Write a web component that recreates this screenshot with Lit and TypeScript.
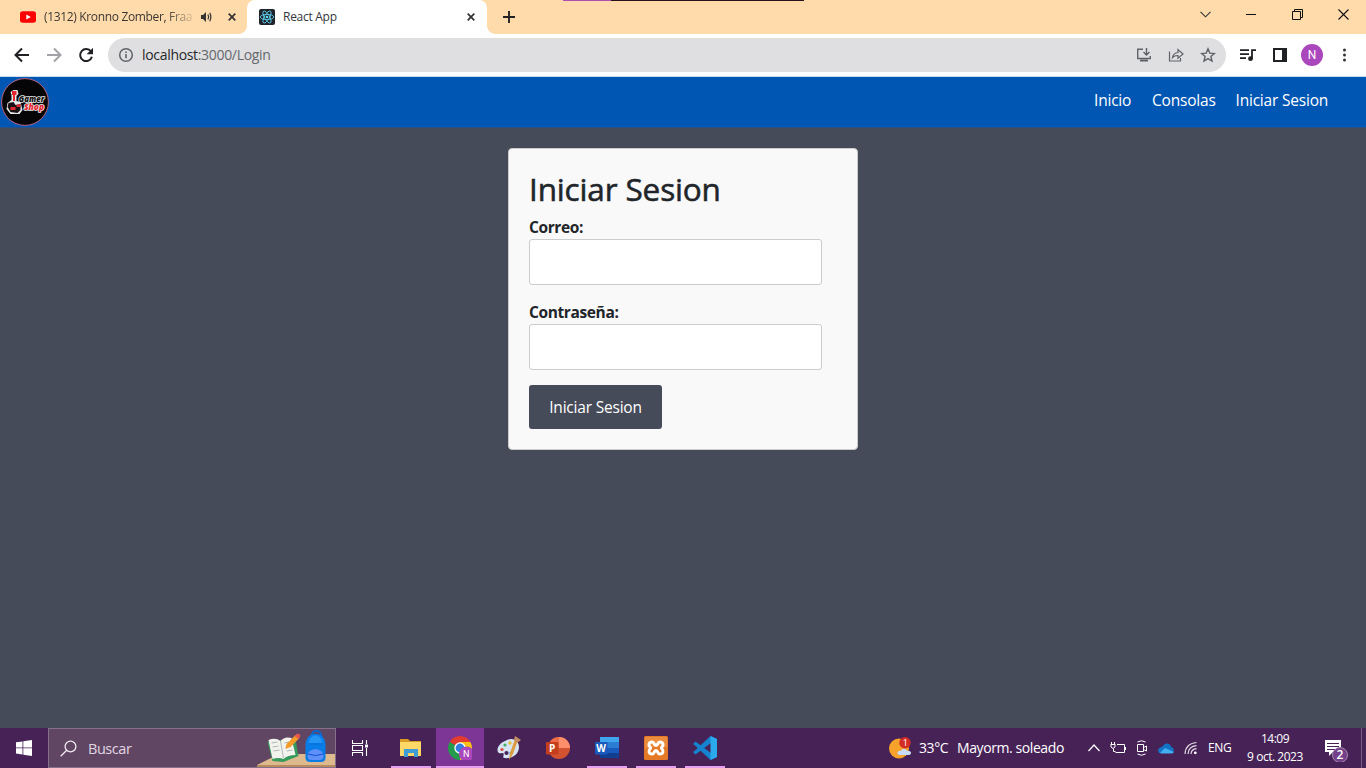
import { LitElement, html, svg, css } from "lit";
import { customElement, property } from "lit/decorators.js";

const sans = css`"Open Sans", "Noto Sans", sans-serif`;

const closeIcon = html`<svg class="ic" width="8" height="8" viewBox="0 0 8 8"><path d="M.7.7l6.6 6.6M7.3.7L.7 7.3" stroke="#333" stroke-width="1.7"/></svg>`;

@customElement("browser-tabs")
class BrowserTabs extends LitElement {
  static styles = css`
    :host { display: flex; height: 34px; background: #ffdbac; font: 12px/34px ${sans}; color: #3c3733; position: relative; }
    .ic { display: block; flex: none; }
    .tab { display: flex; align-items: center; box-sizing: border-box; height: 34px; flex: none; white-space: nowrap; }
    .first { width: 247px; padding-left: 20px; padding-right: 11px; }
    .first .label { width: 150px; margin: 0 7px 0 8px; letter-spacing: -.34px; mask-image: linear-gradient(90deg, #000 122px, transparent 154px); }
    .first .sound { margin-right: auto; }
    .active { width: 240px; padding: 0 12px; background: #fff; border-radius: 8px 8px 0 0; color: #33383c; position: relative; }
    .active .label { margin-left: 8px; flex: 1; letter-spacing: -.28px; }
    .active::before, .active::after { content: ""; position: absolute; bottom: 0; width: 8px; height: 8px; }
    .active::before { left: -8px; background: radial-gradient(circle at 0 0, transparent 7.5px, #fff 8px); }
    .active::after { right: -8px; background: radial-gradient(circle at 100% 0, transparent 7.5px, #fff 8px); }
    .plus { margin: 11px 0 0 16px; }
    .spacer { flex: 1; }
    .controls { display: flex; align-items: center; gap: 35px; height: 29px; padding-right: 17px; }
    .strip { position: absolute; left: 563px; top: 0; width: 241px; height: 1px; background: linear-gradient(90deg, #b14eb0 48px, #2a1119 48px); }
  `;
  render() {
    return html`
      <div class="tab first">
        <svg class="ic" width="16" height="16" viewBox="0 0 16 16"><rect y="2.3" width="16" height="11.5" rx="2.8" fill="#f00"/><path d="M6.3 5.4v5.2L10.8 8z" fill="#fff"/></svg>
        <span class="label">(1312) Kronno Zomber, Fraa</span>
        <svg class="ic sound" width="11" height="10" viewBox="0 0 11 10"><path d="M0 3h2l3-3v10L2 7H0z" fill="#333"/><path d="M6.8 2.7q1.6 2.3 0 4.6M8.7.8q2.3 4.2 0 8.4" fill="none" stroke="#333" stroke-width="1.2"/></svg>
        ${closeIcon}
      </div>
      <div class="tab active">
        <svg class="ic" width="16" height="16" viewBox="0 0 16 16"><rect width="16" height="16" rx="2" fill="#20232a"/><g fill="none" stroke="#61dafb" stroke-width=".8"><ellipse cx="8" cy="8" rx="6.8" ry="2.6"/><ellipse cx="8" cy="8" rx="6.8" ry="2.6" transform="rotate(60 8 8)"/><ellipse cx="8" cy="8" rx="6.8" ry="2.6" transform="rotate(120 8 8)"/></g><circle cx="8" cy="8" r="1.3" fill="#61dafb"/></svg>
        <span class="label">React App</span>
        ${closeIcon}
      </div>
      <svg class="ic plus" width="12" height="12" viewBox="0 0 12 12"><path d="M6 0v12M0 6h12" stroke="#222" stroke-width="1.9"/></svg>
      <div class="spacer"></div>
      <div class="controls">
        <svg class="ic" width="11" height="11" viewBox="0 0 11 11"><path d="M.5 2.8l5 5 5-5" fill="none" stroke="#333" stroke-width="1.1"/></svg>
        <svg class="ic" width="11" height="11" viewBox="0 0 11 11"><path d="M0 5.5h10" stroke="#111"/></svg>
        <svg class="ic" width="11" height="11" viewBox="0 0 11 11"><path d="M.5 2.5h8v8h-8zM2.5 2.5v-2h8v8h-2" fill="none" stroke="#111"/></svg>
        <svg class="ic" width="11" height="11" viewBox="0 0 11 11"><path d="M.5.5l10 10M10.5.5l-10 10" stroke="#111" stroke-width="1.1"/></svg>
      </div>
      <div class="strip"></div>`;
  }
}

@customElement("browser-toolbar")
class BrowserToolbar extends LitElement {
  static styles = css`
    :host { display: flex; align-items: center; box-sizing: border-box; height: 43px; padding: 0 15px 1px 14px; background: #fff; border-bottom: 1px solid #c8dcef; font-family: ${sans}; }
    svg { display: block; flex: none; }
    .nav { display: flex; gap: 16px; width: 94px; flex: none; }
    .omnibox { display: flex; align-items: center; box-sizing: border-box; width: 1118px; height: 34px; border-radius: 17px; background: #dfdfe1; padding: 0 10px; flex: none; }
    .url { flex: 1; margin-left: 8px; font-size: 14px; line-height: 34px; letter-spacing: -.32px; color: #65686c; white-space: nowrap; }
    .host { color: #26282b; }
    .actions { display: flex; gap: 16px; }
    .extras { display: flex; align-items: center; margin-left: 13px; }
    .avatar { width: 22px; height: 22px; border-radius: 50%; background: #ab47bc; color: #fff; font: 12px/22px Roboto, sans-serif; text-align: center; margin: 0 14px; }
    .music { margin-right: 16px; }
  `;
  render() {
    return html`
      <div class="nav">
        <svg width="16" height="16" viewBox="0 0 16 16"><path d="M15 8H2M8 1.5L1.5 8 8 14.5" fill="none" stroke="#202124" stroke-width="2"/></svg>
        <svg width="16" height="16" viewBox="0 0 16 16"><path d="M1 8h13M8 1.5l6.5 6.5L8 14.5" fill="none" stroke="#a0a2a5" stroke-width="2"/></svg>
        <svg width="16" height="16" viewBox="0 0 16 16"><path d="M13 4.5a6 6 0 1 0 .9 5.2" fill="none" stroke="#202124" stroke-width="2"/><path d="M15 .8v6.4H8.6z" fill="#202124"/></svg>
      </div>
      <div class="omnibox">
        <svg width="16" height="16" viewBox="0 0 16 16"><circle cx="8" cy="8" r="6.3" fill="none" stroke="#5f6368" stroke-width="1.5"/><path d="M8 7v4.2M8 4.5v1.6" stroke="#5f6368" stroke-width="1.6"/></svg>
        <div class="url"><span class="host">localhost</span>:3000/Login</div>
        <div class="actions">
          <svg width="16" height="16" viewBox="0 0 16 16" fill="none" stroke="#5f6368" stroke-width="1.4"><path d="M7 2.2H1.7v9.3h12.6V9M10.5 1v6.5M7.5 5l3 3 3-3"/><path d="M4 13.5h8" stroke-width="2"/></svg>
          <svg width="16" height="16" viewBox="0 0 16 16" fill="none" stroke="#5f6368" stroke-width="1.2"><path d="M1.5 4.5v9.5h11v-3M4.5 10.5q.7-4.5 5.5-5V2.5L15 7l-5 4.3V8.5q-3.5-.2-5.5 2z"/></svg>
          <svg width="16" height="16" viewBox="0 0 16 16"><path d="M8 1.9l1.8 4.2 4.6.4-3.5 3 1.1 4.5L8 11.6 4 14l1.1-4.5-3.5-3 4.6-.4z" fill="none" stroke="#5f6368" stroke-width="1.4"/></svg>
        </div>
      </div>
      <div class="extras">
        <svg class="music" width="18" height="16" viewBox="0 0 18 16"><path d="M1 3.2h9M1 7.2h9M1 11.2h6M13 12V3.2h4" fill="none" stroke="#202124" stroke-width="1.8"/><circle cx="11.5" cy="11.7" r="2.4" fill="#202124"/></svg>
        <svg width="14" height="14" viewBox="0 0 14 14"><path d="M1 1h12v12H1z" fill="#fff" stroke="#202124" stroke-width="2"/><path d="M9 1h4v12H9z" fill="#202124"/></svg>
        <div class="avatar">N</div>
        <svg width="16" height="16" viewBox="0 0 16 16" fill="#303235"><circle cx="7.5" cy="3" r="1.5"/><circle cx="7.5" cy="8" r="1.5"/><circle cx="7.5" cy="13" r="1.5"/></svg>
      </div>`;
  }
}

@customElement("login-page")
class LoginPage extends LitElement {
  static styles = css`
    :host { display: block; flex: 1; background: #454b59; font: 16px/24px ${sans}; color: #212529; }
    .bar { display: flex; justify-content: space-between; box-sizing: border-box; height: 51px; padding: 1px 38px 0 1px; background: #0056b3; border-bottom: 1px solid #294f84; }
    .logo { display: block; }
    .links { display: flex; gap: 20px; padding-top: 10px; font-size: 15.5px; letter-spacing: -.2px; color: #fff; white-space: nowrap; }
    .i { width: 38px; } .c { width: 63.5px; } .s { width: 92.5px; }
    .card { box-sizing: border-box; width: 350px; height: 302px; margin: 20px auto 0; padding: 20px; background: #f9f9f9; border: 1px solid #ccc; border-radius: 4px; }
    h2 { margin: 0 0 6px; font-size: 31.5px; line-height: 40px; font-weight: 500; letter-spacing: -.15px; -webkit-text-stroke: .55px #212529; white-space: nowrap; }
    label { display: block; height: 24px; font-weight: 700; font-size: 15.5px; letter-spacing: -.38px; line-height: 24px; }
    input { display: block; box-sizing: border-box; width: 293px; height: 46px; margin: 0 0 15px; border: 1px solid #ccc; border-radius: 3px; background: #fff; padding: 10px; }
    button { display: block; width: 133px; height: 44px; padding: 0; border: 0; border-radius: 3px; background: #454b59; color: #fff; font: 15.5px/44px ${sans}; letter-spacing: -.2px; white-space: nowrap; }
  `;
  render() {
    return html`
      <nav class="bar">
        <svg class="logo" width="48" height="48" viewBox="0 0 48 48">
          <circle cx="24" cy="24" r="23.4" fill="#050507" stroke="#b8647f" stroke-width="1"/>
          <path d="M9.5 14l3-2h4l1 4-2 2v5l4 1 2 8-3 4h-9l-4-5 1-6 4-3v-5z" fill="#e8e8e8"/>
          <path d="M11 13h4.5v4H14v6h-2v-6h-1z" fill="#e32631"/>
          <path d="M7.5 25l5-1 2 3 5-1v6l-3 3-7-1-3-5z" fill="#181215"/>
          <path d="M9.5 29h5v3h-5zM15.5 27l4-1v3h-4z" fill="#e32631"/>
          <g font-family="Open Sans, sans-serif" font-weight="800" font-style="italic" paint-order="stroke" stroke-linejoin="round">
            <text x="17.8" y="23.5" font-size="8.2" textLength="25.5" lengthAdjust="spacingAndGlyphs" fill="#111" stroke="#eee" stroke-width="1.6">Gamer</text>
            <text x="23" y="32" font-size="8.2" textLength="20" lengthAdjust="spacingAndGlyphs" fill="#e32631" stroke="#eee" stroke-width="1.6">Shop</text>
          </g>
        </svg>
        <div class="links"><span class="i">Inicio</span><span class="c">Consolas</span><span class="s">Iniciar Sesion</span></div>
      </nav>
      <div class="card">
        <h2>Iniciar Sesion</h2>
        <label>Correo:</label><input type="email" />
        <label>Contraseña:</label><input type="password" />
        <button>Iniciar Sesion</button>
      </div>`;
  }
}

const appIcons: Record<string, unknown> = {
  explorer: svg`<path d="M1 3h8l2 2h11v3H1z" fill="#d99b22"/><path d="M1 6h21v14H1z" fill="#ffd868"/><path d="M5 13h14v8h-4v-4H9v4H5z" fill="#3f9cd5"/>`,
  chrome: svg`<path d="M12 12L1.61 6A12 12 0 0 1 22.39 6z" fill="#e33b2e"/><path d="M12 12L1.61 6A12 12 0 0 0 12 24z" fill="#249a4c"/><path d="M12 12V24A12 12 0 0 0 22.39 6H12z" fill="#fbc116"/><circle cx="12" cy="12" r="5.7" fill="#fff"/><circle cx="12" cy="12" r="4.4" fill="#377de0"/><circle cx="18.5" cy="18" r="7.6" fill="#ab47bc"/><text x="18.3" y="21.3" font-family="Roboto, sans-serif" font-size="9" text-anchor="middle" fill="#fff">N</text>`,
  paint: svg`<path d="M8 5c8-5 14 0 14 6 0 8-8 12-15 11-2-1 1-4-1-5-2 0-4 1-5-1C-1 12 3 7 8 5z" fill="#d6e5f1"/><circle cx="8" cy="9" r="1.6" fill="#44ad65"/><circle cx="13" cy="7" r="1.7" fill="#e8bd37"/><circle cx="5" cy="13.5" r="1.6" fill="#e14a3b"/><circle cx="9.5" cy="17" r="2.1" fill="#472257"/><circle cx="14" cy="17" r="1.6" fill="#2d94d3"/><path d="M21 4l-5 14-4 6 1-7 5-14z" fill="#df9c43"/><path d="M17 4l1-4 6 4-4 3z" fill="#c58e61"/>`,
  ppt: svg`<circle cx="13" cy="12" r="11" fill="#d35230"/><path d="M13 1a11 11 0 0 1 11 11H13z" fill="#ff8f6b"/><path d="M13 1a11 11 0 0 0-11 11h11z" fill="#ed6c47"/><rect y="6" width="12.5" height="12.5" rx="1" fill="#c43e1c"/><text x="6.2" y="16" font-family="Open Sans, sans-serif" font-weight="700" font-size="10" text-anchor="middle" fill="#fff">P</text>`,
  word: svg`<path d="M5 1h19v6H5z" fill="#41a5ee"/><path d="M5 6h19v6H5z" fill="#2b7cd3"/><path d="M5 12h19v5H5z" fill="#185abd"/><path d="M5 17h19v5H5z" fill="#103f91"/><rect y="6" width="12.5" height="12.5" rx="1" fill="#185abd"/><text x="6.2" y="16" font-family="Open Sans, sans-serif" font-weight="700" font-size="10" text-anchor="middle" fill="#fff">W</text>`,
  xampp: svg`<rect width="24" height="24" rx="1.5" fill="#e57925"/><path d="M1 1h22v10q-12-2-22 2z" fill="#ec8d3d"/><path d="M8 6c3 0 1.5 3.5 4 3.5S13 6 16 6s4 3 2 5c-1 1-1 1 0 2 2 2 1 5-2 5s-1.5-3.5-4-3.5S11 18 8 18s-4-3-2-5c1-1 1-1 0-2-2-2-1-5 2-5z" fill="none" stroke="#fff" stroke-width="3"/>`,
  code: svg`<path d="M17.5 0L24 3v18l-6.5 3L2 9.5 0 8l2.5-2.5L18 17V7L2.500 18.5 0 16l2-1.5z" fill="#1683ce"/><path d="M17.5 0L24 3v18l-6.5 3z" fill="#2ca9ed"/>`,
};

@customElement("task-app")
class TaskApp extends LitElement {
  @property() name = "";
  @property() mode = "";
  static styles = css`
    :host { display: block; width: 49px; flex: none; }
    .cell { position: relative; display: flex; align-items: center; justify-content: center; height: 40px; }
    .on::after { content: ""; position: absolute; left: 5px; width: 40px; bottom: 0; height: 2px; background: #e4a0ee; }
    .focus { margin-left: 1px; background: #7d3695; }
    .focus::after { left: 0; width: 48px; }
  `;
  render() {
    return html`<div class="cell ${this.mode}"><svg width="24" height="24" viewBox="0 0 24 24">${appIcons[this.name]}</svg></div>`;
  }
}

@customElement("task-bar")
class TaskBar extends LitElement {
  static styles = css`
    :host { display: flex; align-items: center; height: 40px; background: #472257; color: #fff; font: 12px/18px ${sans}; white-space: nowrap; }
    svg { display: block; flex: none; }
    .start { width: 48px; display: flex; justify-content: center; }
    .search { display: flex; align-items: center; box-sizing: border-box; width: 288px; height: 40px; padding-left: 11px; background: #604662; border: 1px solid #84708a; font-size: 14.5px; letter-spacing: -.45px; color: #e0d6e2; }
    .search span { flex: 1; margin-left: 11px; padding-top: 1px; }
    .view { width: 50px; display: flex; justify-content: center; padding-right: 2px; box-sizing: border-box; }
    .spacer { flex: 1; }
    .weather { display: flex; align-items: center; font-size: 14px; letter-spacing: -.41px; width: 199px; }
    .deg { width: 30px; margin: 0 8px 0 7px; }
    .tray { display: flex; align-items: center; width: 120px; }
    .tray svg { margin-right: 10px; }
    .tray .plug { margin-right: 9px; }
    .lang { width: 32px; letter-spacing: -.4px; }
    .clock { width: 70px; text-align: center; letter-spacing: -.47px; }
    .notes { margin: 0 9px 0 14px; }
    .edge { width: 1px; height: 40px; background: #765b82; margin-right: 4px; }
  `;
  render() {
    return html`
      <div class="start"><svg width="16" height="16" viewBox="0 0 16 16" fill="#fff"><path d="M0 2.3l6.5-.9v6.1H0zM7.3 1.3L16 0v7.5H7.3zM0 8.3h6.5v6.2L0 13.6zM7.3 8.3H16V16l-8.7-1.3z"/></svg></div>
      <div class="search">
        <svg width="17" height="17" viewBox="0 0 17 17" fill="none" stroke="#f1e8f2" stroke-width="1.3"><circle cx="10.5" cy="6.5" r="5.4"/><path d="M6.5 10.5L.7 16.3"/></svg>
        <span>Buscar</span>
        <svg width="80" height="38" viewBox="0 0 80 38">
          <path d="M2 36L24 25h56v11z" fill="#ddb98d"/><path d="M2 36h78v2H2z" fill="#b88b5e"/>
          <g transform="translate(2.5 0)">
            <path d="M10 13l14-2 14-1 3 17-15 6-11-1z" fill="#369a5c"/>
            <path d="M11 11q7-3 12 1 4-5 11-3l4 17q-8 0-12 4-5-2-11 0z" fill="#f3f3ed"/>
            <path d="M23 12l3 17M14 14l6-1M15 18l6-1M16 22l6-1M27 14l5-1M28 18l6-1M29 22l6-1" stroke="#aeb8b9" fill="none"/>
            <path d="M28 20l1-5 9-9 4 3-9 9z" fill="#f49b29"/><path d="M37 7l2-2q3-1 4 2l-2 3z" fill="#e5584c"/>
          </g>
          <g transform="translate(2.5 0)">
            <path d="M54 7q1-5 5-5t5 5" fill="none" stroke="#0867d3" stroke-width="2"/>
            <path d="M48 16c0-15 20-15 20 0v13q0 4-5 4H53q-5 0-5-4z" fill="#087ce7"/>
            <path d="M51 14c1-10 13-10 14 0z" fill="#2494f5"/>
            <path d="M51 15h14" stroke="#0a6cd8"/>
            <path d="M50 27c0-9 16-9 16 0q0 4-4 4h-8q-4 0-4-4z" fill="#5f8ff8"/><path d="M50 25q8 3 16 0" stroke="#1452d1" fill="none"/>
          </g>
        </svg>
      </div>
      <div class="view"><svg width="16" height="16" viewBox="0 0 16 16" fill="none" stroke="#fff" stroke-width="1.1"><path d="M.5 0v3.5h10V0M.5 16v-3.5h10V16M.5 5.5h10v5H.5zM14.5 0v4M14.5 8v8"/><path d="M13 4.5h3v3h-3z" fill="#fff" stroke="none"/></svg></div>
      <task-app name="explorer" mode="on"></task-app>
      <task-app name="chrome" mode="on focus"></task-app>
      <task-app name="paint"></task-app>
      <task-app name="ppt"></task-app>
      <task-app name="word" mode="on"></task-app>
      <task-app name="xampp" mode="on"></task-app>
      <task-app name="code" mode="on"></task-app>
      <div class="spacer"></div>
      <div class="weather">
        <svg width="23" height="22" viewBox="0 0 23 22"><circle cx="10" cy="11.5" r="10" fill="#f6a22b"/><path d="M11 18c-4 0-3-5 1-4 1-3 5-3 6 0 5-1 5 4 2 4z" fill="#c7dcf6"/><circle cx="16" cy="5.7" r="5.7" fill="#d32d26"/><text x="16" y="9" font-family="Open Sans, sans-serif" font-size="9" text-anchor="middle" fill="#fff">1</text></svg>
        <span class="deg">33°C</span><span>Mayorm. soleado</span>
      </div>
      <div class="tray">
        <svg width="12" height="16" viewBox="0 0 12 16"><path d="M.5 11L6 5l5.5 6" fill="none" stroke="#fff" stroke-width="1.2"/></svg>
        <svg class="plug" width="17" height="16" viewBox="0 0 17 16" fill="none" stroke="#fff"><path d="M7 4.5h7.5v8h-9M15.5 7v3M1.5 2v2M4.5 2v2M.5 4.5h5M1 5v2q2 3 4 0V5M3.5 8.5v3h2"/></svg>
        <svg width="12" height="16" viewBox="0 0 12 16" fill="none" stroke="#fff"><path d="M1.5 4.5h6v7h-6zM7.5 7.500l3-1.5v5l-3-1.5M1.5 2q4-2.5 8 0M1.5 14q4 2.5 8 0"/></svg>
        <svg width="16" height="16" viewBox="0 0 16 16"><path d="M1 13c-3-5 3-6 4-7 2-4 8-3 8 1 3 0 4 5 1 6z" fill="#1272c4"/><path d="M2 13l5-5 9 4q-1 1.5-3 1.5H3z" fill="#42b0f0"/></svg>
        <svg width="14" height="16" viewBox="0 0 14 16" fill="none" stroke="#fff" stroke-width="1.2"><path d="M1 14Q1.5 3.5 12.5 2.5M4 14q.5-7.500 8.5-8.3M7 14q.3-4.8 5.5-5.3" opacity=".85"/><circle cx="11.3" cy="12.8" r="1.4" fill="#fff" stroke="none"/></svg>
      </div>
      <div class="lang">ENG</div>
      <div class="clock"><div>14:09</div><div>9 oct. 2023</div></div>
      <svg class="notes" width="28" height="28" viewBox="0 0 28 28"><path d="M1 6h16v12H9l-4 4v-4H1z" fill="#fff"/><path d="M3 9.5h12M3 12.5h12M3 15.5h8" stroke="#472257"/><circle cx="16" cy="21" r="7.5" fill="#75408a" stroke="#a38bac"/><text x="16" y="25.2" font-family="Open Sans, sans-serif" font-size="12" font-weight="600" text-anchor="middle" fill="#fff">2</text></svg>
      <div class="edge"></div>`;
  }
}

@customElement("app-root")
class AppRoot extends LitElement {
  static styles = css`:host { display: flex; flex-direction: column; width: 1366px; height: 768px; overflow: hidden; }`;
  render() {
    return html`<browser-tabs></browser-tabs><browser-toolbar></browser-toolbar><login-page></login-page><task-bar></task-bar>`;
  }
}
